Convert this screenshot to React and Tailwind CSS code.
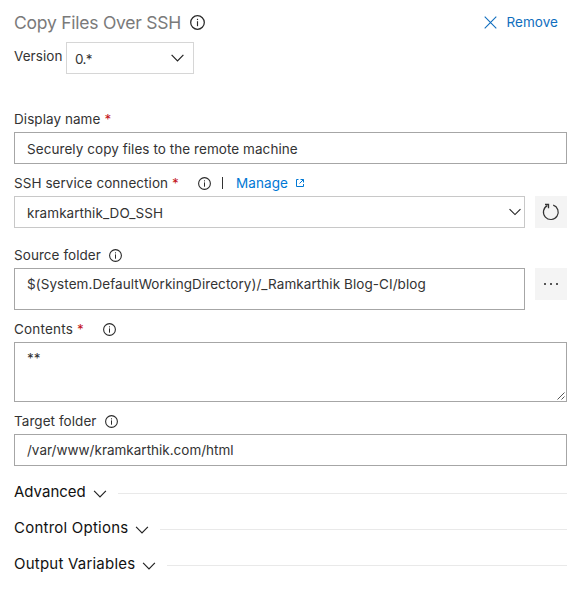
import React from 'react';

function Info({ size = 13, className = '' }) {
  return (
    <svg width={size} height={size} viewBox="0 0 13 13" fill="none" className={`shrink-0 ${className}`}>
      <circle cx="6.5" cy="6.5" r="5.9" stroke="#2a2a2a" strokeWidth="1.1" />
      <path d="M6.5 5.4v4.3" stroke="#2a2a2a" strokeWidth="1" />
      <path d="M6.5 3.3v1.1" stroke="#2a2a2a" strokeWidth="1" />
    </svg>
  );
}

function Chevron({ w = 13, color = '#222', className = '' }) {
  return (
    <svg width={w} height="8" viewBox="0 0 13 8" fill="none" className={`shrink-0 ${className}`}>
      <path d="M0.6 0.8L6.5 6.8L12.4 0.8" stroke={color} strokeWidth="1.2" />
    </svg>
  );
}

function Label({ text, tracking = '', required, children }) {
  return (
    <div className="flex h-6 items-center whitespace-nowrap">
      <span className={tracking}>{text}</span>
      {required && <span className="ml-[4px] w-[6px] text-[#c4151c]">*</span>}
      {children}
    </div>
  );
}

function Section({ title, tracking }) {
  return (
    <div className="flex h-9 items-center whitespace-nowrap text-[15px] text-[#111]">
      <span className={tracking}>{title}</span>
      <Chevron w={14} className="mt-[4px] ml-[7px]" />
      <span className="mt-[3px] ml-[11px] h-px flex-1 bg-[#e9e9e9]" />
    </div>
  );
}

export default function App() {
  return (
    <div className="h-[590px] w-[583px] overflow-hidden bg-white pr-4 pl-[14px] font-['Inter','Liberation_Sans',sans-serif] text-[13.5px] tracking-[0.06px] leading-5 text-[#333]">
      <div className="flex h-[42px] items-center pt-[2px] whitespace-nowrap">
        <h1 className="pt-[2px] text-[17.5px] tracking-[-0.24px] text-[#7a7a7a]">Copy Files Over SSH</h1>
        <Info size={15} className="ml-[9px]" />
        <button className="mr-[9px] ml-auto flex items-center text-[#106ebe]">
          <svg width="13" height="13" viewBox="0 0 13 13" fill="none" className="mr-[9px]">
            <path d="M0.7 0.7L12.3 12.3M12.3 0.7L0.7 12.3" stroke="#106ebe" strokeWidth="1.1" />
          </svg>
          <span>Remove</span>
        </button>
      </div>

      <div className="flex h-8">
        <span className="mt-[4px] w-[52px]">Version</span>
        <div className="flex h-8 w-32 items-center border border-[#d6d6d6] pr-[9px] pl-[8px]">
          <span className="mt-[2px] flex-1 tracking-[-0.6px]">0.*</span>
          <Chevron w={13} />
        </div>
      </div>

      <div className="mt-[33px] h-[25px]">
        <Label text="Display name" required />
      </div>
      <div className="flex h-8 items-center border border-[#a6a6a6] px-3 pt-[2px]">
        <span>Securely copy files to the remote machine</span>
      </div>

      <div className="h-8 pt-[7px]">
        <Label text="SSH service connection" required>
          <Info className="ml-[20px]" />
          <span className="mr-px ml-[11px] h-[12px] w-px bg-[#333]" />
          <a className="ml-[12px] text-[#0078d4]">Manage</a>
          <svg width="10" height="10" viewBox="0 0 10 10" fill="none" className="ml-[7px]">
            <path d="M3.5 1.5H1.5V8.5H8.5V6M5.5 1.5H8.5V4.5M8.5 1.5L4.5 5.5" stroke="#0078d4" strokeWidth="1" />
          </svg>
        </Label>
      </div>
      <div className="flex gap-[10px]">
        <div className="flex h-8 w-[511px] items-center border border-[#c8c8c8] pr-[3px] pl-3">
          <span className="mt-[2px] flex-1">kramkarthik_DO_SSH</span>
          <Chevron w={12} />
        </div>
        <button className="flex size-8 items-center justify-center bg-[#f4f4f4]">
          <svg width="18" height="18" viewBox="0 0 18 18" fill="none">
            <path d="M11.2 2.1A7.4 7.4 0 1 1 5.3 2.6" stroke="#333" strokeWidth="1.2" />
            <path d="M3 1.5H6.5V5.3" stroke="#333" strokeWidth="1.3" />
          </svg>
        </button>
      </div>

      <div className="h-10 pt-[15px]">
        <Label text="Source folder">
          <Info className="ml-[8px]" />
        </Label>
      </div>
      <div className="flex gap-[10px]">
        <div className="h-[42px] w-[511px] border border-[#a6a6a6] px-3 pt-[5px] tracking-[0.07px]">
          $(System.DefaultWorkingDirectory)/_Ramkarthik Blog-CI/blog
        </div>
        <button className="flex size-8 items-center justify-center gap-1 bg-[#f4f4f4]">
          <i className="size-[2px] bg-[#555]" />
          <i className="size-[2px] bg-[#555]" />
          <i className="size-[2px] bg-[#555]" />
        </button>
      </div>

      <div className="h-8 pt-[7px]">
        <Label text="Contents" tracking="tracking-[0.2px]" required>
          <Info className="ml-[20px]" />
        </Label>
      </div>
      <div className="flex h-[60px] justify-between border border-[#a6a6a6] pt-[5px] pr-px pb-px pl-3">
        <span>**</span>
        <svg width="8" height="8" viewBox="0 0 8 8" fill="none" className="self-end">
          <path d="M0.5 7.5L7.5 0.5M4.5 7.5L7.5 4.5" stroke="#555" strokeWidth="1" />
        </svg>
      </div>

      <div className="h-8 pt-[7px]">
        <Label text="Target folder">
          <Info className="ml-[8px]" />
        </Label>
      </div>
      <div className="flex h-8 items-center border border-[#a6a6a6] px-3">
        <span className="tracking-[0px]">/var/www/kramkarthik.com/html</span>
      </div>

      <div className="mt-2">
        <Section title="Advanced" tracking="tracking-[0px]" />
        <Section title="Control Options" tracking="tracking-[0.23px]" />
        <Section title="Output Variables" tracking="tracking-[0.22px]" />
      </div>
    </div>
  );
}
